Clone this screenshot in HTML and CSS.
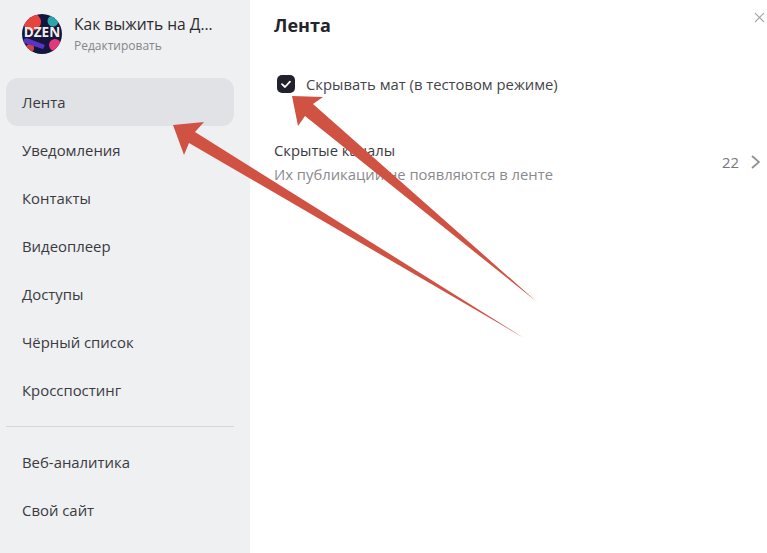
FILE: index.html
```html
<!DOCTYPE html>
<html lang="ru">
<head>
    <meta charset="UTF-8">
    <title>Настройки канала</title>
    <link rel="stylesheet" href="styles.css">
</head>
<body>
    <div class="layout">
        <aside class="sidebar">
            <div class="channel">
                <svg class="avatar" viewBox="0 0 40 40">
                    <defs>
                        <clipPath id="avatar-clip"><circle cx="20" cy="20" r="20"/></clipPath>
                    </defs>
                    <g clip-path="url(#avatar-clip)">
                        <rect width="40" height="40" fill="#14163f"/>
                        <circle cx="10" cy="8" r="9" fill="#e8443f"/>
                        <circle cx="31" cy="7" r="5.5" fill="#2aa5a8"/>
                        <circle cx="33" cy="31" r="6" fill="#e2387c"/>
                        <circle cx="8" cy="34" r="4" fill="#d8403f"/>
                        <path d="M2 25 L5 24 L23 31 L21 35 L2 29 Z" fill="#5a35c0"/>
                    </g>
                    <text class="avatar-text" x="20" y="23" text-anchor="middle">DZEN</text>
                </svg>
                <div class="channel-info">
                    <div class="channel-name">Как выжить на Д...</div>
                    <div class="channel-edit">Редактировать</div>
                </div>
            </div>
            <nav class="menu">
                <a class="menu-item active">Лента</a>
                <a class="menu-item">Уведомления</a>
                <a class="menu-item">Контакты</a>
                <a class="menu-item">Видеоплеер</a>
                <a class="menu-item">Доступы</a>
                <a class="menu-item">Чёрный список</a>
                <a class="menu-item">Кросспостинг</a>
                <div class="menu-divider"></div>
                <a class="menu-item">Веб-аналитика</a>
                <a class="menu-item">Свой сайт</a>
            </nav>
        </aside>
        <main class="content">
            <h1 class="title">Лента</h1>
            <label class="check-row">
                <span class="check-box">
                    <svg viewBox="0 0 18 18" width="18" height="18"><path d="M5 9.2 L8 12 L13 6.6" fill="none" stroke="#fff" stroke-width="1.8" stroke-linecap="round" stroke-linejoin="round"/></svg>
                </span>
                <span>Скрывать мат (в тестовом режиме)</span>
            </label>
            <div class="hidden-row">
                <div class="hidden-text">
                    <div class="hidden-title">Скрытые каналы</div>
                    <div class="hidden-sub">Их публикации не появляются в ленте</div>
                </div>
                <span class="hidden-count">22</span>
                <svg class="chevron" viewBox="0 0 9 14" width="9" height="14"><path d="M1 1 L8 7 L1 13" fill="none" stroke="#8f8f8f" stroke-width="1.7"/></svg>
            </div>
        </main>
    </div>

    <svg class="close" viewBox="0 0 11 11" width="11" height="11"><path d="M1 1 L10 10 M10 1 L1 10" stroke="#a8a8a8" stroke-width="1.1" fill="none"/></svg>

    <!-- стрелки поверх скриншота -->
    <svg class="arrows" viewBox="0 0 767 553" width="767" height="553">
        <path d="M173 125 L204 122 L195 132 L524 338 L189 143 L184 155 Z" fill="#d05243"/>
        <path d="M292 96 L323 97 L313 104 L537 302 L305 116 L298 126 Z" fill="#d05243"/>
    </svg>
</body>
</html>
```

FILE: styles.css
```css
* {
    box-sizing: border-box;
    margin: 0;
    padding: 0;
}

html, body {
    height: 100%;
    overflow: hidden;
}

body {
    font-family: 'Open Sans', sans-serif;
    font-size: 14.9px;
    color: #2b2b30;
    background-color: #fff;
    position: relative;
}

.layout {
    display: flex;
    height: 100%;
}

.sidebar {
    width: 250px;
    flex: none;
    background-color: #eff0f2;
    padding: 14px 16px 0 6px;
}

.channel {
    display: flex;
    align-items: center;
    gap: 12px;
    padding-left: 16px;
    height: 40px;
    margin-bottom: 24px;
}

.avatar {
    width: 40px;
    height: 40px;
    flex: none;
}

.avatar-text {
    font-family: 'Open Sans', sans-serif;
    font-size: 13.5px;
    font-weight: 700;
    fill: #f4efe6;
}

.channel-info {
    padding-top: 1px;
}

.channel-name {
    font-size: 15.6px;
    line-height: 22px;
    white-space: nowrap;
}

.channel-edit {
    font-size: 12px;
    line-height: 22px;
    color: #85868a;
}

.menu-item {
    display: block;
    height: 48px;
    line-height: 49px;
    padding-left: 16px;
    border-radius: 12px;
    color: #3a3a3f;
}

.menu-item.active {
    background-color: #e1e2e5;
}

.menu-divider {
    height: 1px;
    background-color: #d5d6d9;
    margin: 12px 0 11px;
}

.content {
    flex: 1;
    padding: 13px 7px 0 24px;
    font-size: 14.8px;
}

.title {
    font-size: 18px;
    line-height: 24px;
    font-weight: 700;
    color: #24242a;
    margin-bottom: 38px;
}

.check-row {
    display: flex;
    align-items: center;
    gap: 11px;
    padding-left: 3px;
    height: 18px;
    line-height: 18px;
    color: #44444a;
    margin-bottom: 45px;
}

.check-box {
    width: 18px;
    height: 18px;
    flex: none;
    display: block;
    border-radius: 5px;
    background-color: #22222e;
}

.check-box svg {
    display: block;
}

.hidden-row {
    display: flex;
    align-items: center;
}

.hidden-text {
    flex: 1;
}

.hidden-title {
    line-height: 24px;
    color: #3a3a3f;
}

.hidden-sub {
    line-height: 24px;
    color: #8a8a8e;
}

.hidden-count {
    color: #77777b;
    margin-right: 12px;
}

.chevron {
    flex: none;
}

.close {
    position: absolute;
    top: 12px;
    right: 2px;
}

.arrows {
    position: absolute;
    left: 0;
    top: 0;
    pointer-events: none;
}
```
